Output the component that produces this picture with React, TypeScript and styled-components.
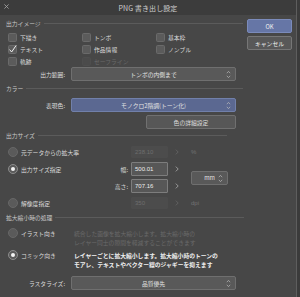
import React from 'react';
import styled, { createGlobalStyle } from 'styled-components';

const GlobalStyle = createGlobalStyle`
  html, body {
    margin: 0;
    padding: 0;
    background: #3b3b3b;
  }
  body {
    font-family: "Noto Sans CJK JP", "Noto Sans", sans-serif;
    font-size: 5.8px;
    color: #dcdcdc;
  }
`;

const Window = styled.div`
  width: 296px;
  height: 297px;
  background: #474747;
  border-right: 1px solid #5e5e5e;
  display: flex;
  flex-direction: column;
  overflow: hidden;
`;

const TitleBar = styled.div`
  height: 15px;
  flex: none;
  background: #3c3c3c;
  display: grid;
  grid-template-columns: 20px 1fr 20px;
  align-items: center;
`;

const CloseIcon = styled.svg`
  width: 5px;
  height: 5px;
  margin-left: 4px;
  margin-top: -2px;
`;

const Title = styled.div`
  text-align: center;
  font-size: 7px;
  color: #cfcfcf;
  letter-spacing: 0.1px;
`;

const Body = styled.div`
  display: flex;
  padding-left: 6px;
  flex: 1;
`;

const Main = styled.div`
  width: 238px;
  display: flex;
  flex-direction: column;
`;

const Side = styled.div`
  width: 45px;
  margin-left: 3px;
  padding-top: 4px;
  display: flex;
  flex-direction: column;
  gap: 3px;
`;

const DialogButton = styled.div<{ $primary?: boolean }>`
  height: 14px;
  box-sizing: border-box;
  border-radius: 2px;
  display: flex;
  align-items: center;
  justify-content: center;
  font-size: 5.8px;
  color: #f0f0f0;
  background: ${p => (p.$primary ? '#6676a6' : '#585858')};
  border: 1px solid ${p => (p.$primary ? '#7b8bbb' : '#767676')};
`;

const SectionHead = styled.div<{ $mt: number; $end?: number }>`
  height: 10px;
  margin-top: ${p => p.$mt}px;
  margin-right: ${p => p.$end ?? 0}px;
  display: flex;
  align-items: center;
  gap: 3px;
  color: #c8c8c8;
  &::after {
    content: '';
    flex: 1;
    height: 1px;
    background: #5b5b5b;
  }
`;

const CheckGrid = styled.div`
  margin-top: 4px;
  padding-left: 2px;
  display: grid;
  grid-template-columns: 74px 74px 74px;
  grid-auto-rows: 10px;
  row-gap: 2px;
`;

const CheckItem = styled.div<{ $disabled?: boolean }>`
  display: flex;
  align-items: center;
  gap: 3px;
  color: ${p => (p.$disabled ? '#6a6a6a' : '#dcdcdc')};
`;

const Box = styled.div<{ $disabled?: boolean }>`
  width: 9px;
  height: 9px;
  box-sizing: border-box;
  border-radius: 1.5px;
  background: ${p => (p.$disabled ? '#4b4b4b' : '#5b5b5b')};
  border: 1px solid ${p => (p.$disabled ? '#4e4e4e' : '#6a6a6a')};
  display: flex;
  align-items: center;
  justify-content: center;
`;

const FieldRow = styled.div<{ $mt: number }>`
  margin-top: ${p => p.$mt}px;
  height: 14px;
  display: flex;
  align-items: center;
`;

const RowLabel = styled.div`
  width: 59px;
  text-align: right;
  margin-right: 6px;
`;

const Select = styled.div<{ $blue?: boolean; $width?: number }>`
  width: ${p => p.$width ?? 165}px;
  height: 14px;
  box-sizing: border-box;
  border-radius: 2px;
  background: ${p => (p.$blue ? '#5b6891' : '#595959')};
  border: 1px solid ${p => (p.$blue ? '#7180aa' : '#6f6f6f')};
  display: flex;
  align-items: center;
  justify-content: center;
  position: relative;
  color: #e2e2e2;
`;

const Spin = styled.svg`
  position: absolute;
  right: 4px;
  top: 2px;
  width: 5px;
  height: 9px;
`;

const PlainButton = styled.div`
  margin-top: 3px;
  margin-left: 140px;
  width: 90px;
  height: 14px;
  box-sizing: border-box;
  border-radius: 2px;
  background: #575757;
  border: 1px solid #707070;
  display: flex;
  align-items: center;
  justify-content: center;
  color: #dcdcdc;
`;

const SizeGrid = styled.div`
  margin-top: 5px;
  display: grid;
  grid-template-columns: 98px 27px 37px 18px auto;
  grid-template-rows: repeat(4, 14px);
  row-gap: 3px;
  align-items: center;
`;

const RadioItem = styled.div<{ $dim?: boolean }>`
  padding-left: 2px;
  display: flex;
  align-items: center;
  gap: 3px;
  color: #dcdcdc;
`;

const Radio = styled.div<{ $on?: boolean }>`
  width: 10px;
  height: 10px;
  flex: none;
  box-sizing: border-box;
  border-radius: 50%;
  background: #5a5a5a;
  border: 1px solid ${p => (p.$on ? '#8c8c8c' : '#676767')};
  display: flex;
  align-items: center;
  justify-content: center;
  &::after {
    content: '';
    display: ${p => (p.$on ? 'block' : 'none')};
    width: 4px;
    height: 4px;
    border-radius: 50%;
    background: #f4f4f4;
  }
`;

const SubLabel = styled.div`
  text-align: right;
  padding-right: 3px;
`;

const NumField = styled.div<{ $disabled?: boolean }>`
  height: ${p => (p.$disabled ? 12 : 14)}px;
  box-sizing: border-box;
  border-radius: 1px;
  background: ${p => (p.$disabled ? '#4c4c4c' : '#575757')};
  border: 1px solid ${p => (p.$disabled ? '#4c4c4c' : '#7d7d7d')};
  padding-left: 3px;
  display: flex;
  align-items: center;
  color: ${p => (p.$disabled ? '#6e6e6e' : '#ececec')};
  font-family: "Liberation Sans", "Noto Sans", sans-serif;
  font-size: 6px;
`;

const Arrow = styled.svg`
  width: 4px;
  height: 6px;
  justify-self: center;
`;

const Unit = styled.div`
  padding-left: 5px;
  color: #737373;
  font-family: "Liberation Sans", "Noto Sans", sans-serif;
  font-size: 6px;
`;

const UnitSelect = styled.div`
  grid-row: 2 / span 2;
  grid-column: 5;
  margin-left: 5px;
  align-self: center;
`;

const ModeList = styled.div`
  margin-top: 6px;
  display: flex;
  flex-direction: column;
  gap: 4px;
`;

const ModeRow = styled.div`
  display: flex;
  align-items: flex-start;
  height: 18px;
`;

const ModeLabel = styled.div`
  width: 66px;
  padding-left: 2px;
  height: 10px;
  display: flex;
  align-items: center;
  gap: 3px;
  color: #dcdcdc;
`;

const ModeDesc = styled.div<{ $active?: boolean }>`
  line-height: 9px;
  margin-top: 0.5px;
  white-space: nowrap;
  color: ${p => (p.$active ? '#f0f0f0' : '#6a6a6a')};
  font-weight: ${p => (p.$active ? 700 : 400)};
`;

const SpinIcon = () => (
  <Spin viewBox="0 0 5 9">
    <path d="M0.8 3.2 L2.5 1.4 L4.2 3.2 M0.8 5.8 L2.5 7.6 L4.2 5.8" fill="none" stroke="#bdbdbd" strokeWidth="0.7" />
  </Spin>
);

const Chevron = ({ dim }: { dim?: boolean }) => (
  <Arrow viewBox="0 0 4 6">
    <path d="M0.8 0.6 L3.2 3 L0.8 5.4" fill="none" stroke={dim ? '#6a6a6a' : '#bcbcbc'} strokeWidth="0.7" />
  </Arrow>
);

const Check = () => (
  <svg width="9" height="9" viewBox="0 0 9 9" style={{ overflow: 'visible' }}>
    <path d="M1.6 4.6 L3.6 7 L8.2 0.4" fill="none" stroke="#f2f2f2" strokeWidth="1" />
  </svg>
);

const checks = [
  { label: '下描き' },
  { label: 'トンボ' },
  { label: '基本枠' },
  { label: 'テキスト', on: true },
  { label: '作品情報' },
  { label: 'ノンブル' },
  { label: '軌跡' },
  { label: 'セーフライン', disabled: true },
];

export default function App() {
  return (
    <>
      <GlobalStyle />
      <Window>
        <TitleBar>
          <CloseIcon viewBox="0 0 5 5">
            <path d="M0.4 0.4 L4.6 4.6 M4.6 0.4 L0.4 4.6" stroke="#a8a8a8" strokeWidth="0.8" />
          </CloseIcon>
          <Title>PNG 書き出し設定</Title>
          <span />
        </TitleBar>
        <Body>
          <Main>
            <SectionHead $mt={3} $end={1}>出力イメージ</SectionHead>
            <CheckGrid>
              {checks.map(c => (
                <CheckItem key={c.label} $disabled={c.disabled}>
                  <Box $disabled={c.disabled}>{c.on && <Check />}</Box>
                  {c.label}
                </CheckItem>
              ))}
            </CheckGrid>
            <FieldRow $mt={1}>
              <RowLabel>出力範囲:</RowLabel>
              <Select>
                トンボの内側まで
                <SpinIcon />
              </Select>
            </FieldRow>

            <SectionHead $mt={2} $end={1}>カラー</SectionHead>
            <FieldRow $mt={5}>
              <RowLabel>表現色:</RowLabel>
              <Select $blue>
                モノクロ2階調(トーン化)
                <SpinIcon />
              </Select>
            </FieldRow>
            <PlainButton>色の詳細設定</PlainButton>

            <SectionHead $mt={1} $end={17}>出力サイズ</SectionHead>
            <SizeGrid>
              <RadioItem>
                <Radio />
                元データからの拡大率
              </RadioItem>
              <span />
              <NumField $disabled>238.10</NumField>
              <Chevron dim />
              <Unit>%</Unit>

              <RadioItem>
                <Radio $on />
                出力サイズ指定
              </RadioItem>
              <SubLabel>幅:</SubLabel>
              <NumField>500.01</NumField>
              <Chevron />
              <UnitSelect>
                <Select $width={37}>
                  mm
                  <SpinIcon />
                </Select>
              </UnitSelect>

              <span />
              <SubLabel>高さ:</SubLabel>
              <NumField>707.16</NumField>
              <Chevron />

              <RadioItem>
                <Radio />
                解像度指定
              </RadioItem>
              <span />
              <NumField $disabled>350</NumField>
              <Chevron dim />
              <Unit>dpi</Unit>
            </SizeGrid>

            <SectionHead $mt={2}>拡大縮小時の処理</SectionHead>
            <ModeList>
              <ModeRow>
                <ModeLabel>
                  <Radio />
                  イラスト向き
                </ModeLabel>
                <ModeDesc>
                  統合した画像を拡大縮小します。拡大縮小時の
                  <br />
                  レイヤー同士の隙間を軽減することができます
                </ModeDesc>
              </ModeRow>
              <ModeRow>
                <ModeLabel>
                  <Radio $on />
                  コミック向き
                </ModeLabel>
                <ModeDesc $active>
                  レイヤーごとに拡大縮小します。拡大縮小時のトーンの
                  <br />
                  モアレ、テキストやベクター線のジャギーを抑えます
                </ModeDesc>
              </ModeRow>
            </ModeList>
            <FieldRow $mt={8}>
              <RowLabel>ラスタライズ:</RowLabel>
              <Select>
                品質優先
                <SpinIcon />
              </Select>
            </FieldRow>
          </Main>
          <Side>
            <DialogButton $primary>OK</DialogButton>
            <DialogButton>キャンセル</DialogButton>
          </Side>
        </Body>
      </Window>
    </>
  );
}
